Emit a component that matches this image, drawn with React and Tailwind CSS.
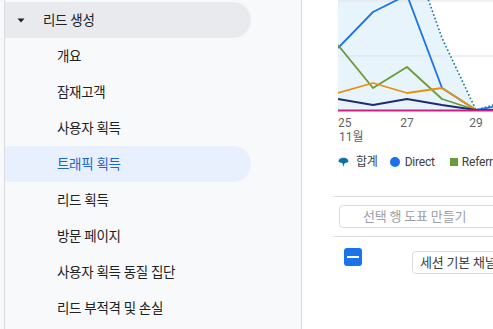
import React from "react";

const font = { fontFamily: 'Roboto, "Noto Sans CJK KR", sans-serif' };

const navItems = [
  { label: "개요" },
  { label: "잠재고객" },
  { label: "사용자 획득" },
  { label: "트래픽 획득", active: true },
  { label: "리드 획득" },
  { label: "방문 페이지" },
  { label: "사용자 획득 동질 집단" },
  { label: "리드 부적격 및 손실" },
];

const series = [
  { color: "#1a73e8", pts: [[0, 48], [35, 12], [69, -5], [104, 88], [138, 110], [160, 106]] },
  { color: "#6a9a3a", pts: [[0, 45], [35, 88], [69, 67], [104, 99], [138, 110], [160, 110]] },
  { color: "#e8900c", pts: [[0, 93], [35, 83], [69, 93], [104, 88], [138, 110], [160, 110]] },
  { color: "#1f2a70", pts: [[0, 99], [35, 105], [69, 99], [104, 105], [138, 110], [160, 110]] },
];

const toPath = (pts) => pts.map((p, i) => `${i ? "L" : "M"}${p[0]} ${p[1]}`).join(" ");

const Chart = () => {
  const total = [[0, -150], [35, -120], [69, -60], [104, 38], [138, 110], [173, 100]];
  const fill = toPath(total) + " L173 110 L0 110 Z";
  return (
    <svg width="155" height="145" viewBox="0 0 155 145" className="block overflow-hidden">
      <path d={fill} fill="#e7f4fc" />
      <line x1="0" y1="1" x2="155" y2="1" stroke="#e3e3e3" strokeWidth="1" />
      <line x1="0" y1="56" x2="155" y2="56" stroke="#dde3e8" strokeWidth="1" />
      <path d={toPath(total)} fill="none" stroke="#1170a6" strokeWidth="1.6" strokeDasharray="1.6 2.2" />
      {series.map((s, i) => (
        <path key={i} d={toPath(s.pts)} fill="none" stroke={s.color} strokeWidth="1.8" strokeLinejoin="round" />
      ))}
      <line x1="0" y1="110.5" x2="155" y2="110.5" stroke="#cc1f82" strokeWidth="2" />
      <g fill="#5f6368" fontSize="12" style={font}>
        <text x="0" y="127">25</text>
        <text x="69" y="127" textAnchor="middle">27</text>
        <text x="138" y="127" textAnchor="middle">29</text>
        <text x="1" y="141">11월</text>
      </g>
    </svg>
  );
};

export default function App() {
  return (
    <div className="flex h-[329px] w-[493px] overflow-hidden bg-white text-[#202124]" style={font}>
      <aside className="w-[302px] shrink-0 border-r border-[#dadce0] bg-[#f8f9fa] pl-1">
        <div className="h-full border-l border-[#dadce0] pt-[2px]">
          <div className="flex h-[36px] w-[246px] items-center rounded-r-full bg-[#e8eaed] text-[13.5px] tracking-[-0.3px]">
            <svg width="8" height="5" viewBox="0 0 8 5" className="ml-[12px] mr-[18px] shrink-0">
              <path d="M0.5 0.5 L7.5 0.5 L4 4.5 Z" fill="#202124" />
            </svg>
            <span>리드 생성</span>
          </div>
          {navItems.map((item) => (
            <div
              key={item.label}
              className={`flex h-[36px] w-[246px] items-center rounded-r-full pl-[52px] text-[13.5px] tracking-[-0.3px] ${
                item.active ? "bg-[#e8f0fe] text-[#1967d2]" : ""
              }`}
            >
              {item.label}
            </div>
          ))}
        </div>
      </aside>

      <main className="min-w-0 flex-1 overflow-hidden pl-[31px]">
        <div className="ml-[5px]">
          <Chart />
        </div>
        <div className="ml-[5px] mt-[9px] flex h-[16px] items-center whitespace-nowrap text-[12px] tracking-[-0.2px] text-[#3c4043]">
          <svg width="11" height="10" viewBox="0 0 11 10" className="mr-[7px] shrink-0">
            <path d="M0.5 5 C0.5 2 3 0.8 5.5 0.8 C8 0.8 10.5 2 10.5 5 L6.6 6.2 L5.5 9.8 L4.4 6.2 Z" fill="#1170a6" />
          </svg>
          <span className="shrink-0">합계</span>
          <span className="ml-[12px] mr-[5px] h-[10px] w-[10px] shrink-0 rounded-full bg-[#1a73e8]" />
          <span className="shrink-0">Direct</span>
          <span className="ml-[15px] mr-[4px] h-[8px] w-[8px] shrink-0 bg-[#6a9a3a]" />
          <span className="shrink-0">Referral</span>
        </div>
        <div className="mt-[26px] w-[220px] border-t border-[#dadce0]" />
        <div className="ml-[6px] mt-[8px] flex h-[23px] w-[200px] items-center rounded-[4px] border border-[#dadce0] pl-[23px] text-[13px] tracking-[-0.2px] text-[#9aa0a6] whitespace-nowrap">
          선택 행 도표 만들기
        </div>
        <div className="mt-[8px] w-[220px] border-t border-[#dadce0]" />
        <div className="mt-[11px] flex items-start whitespace-nowrap">
          <div className="ml-[11px] flex h-[18px] w-[18px] shrink-0 items-center justify-center rounded-[3px] bg-[#1a73e8]">
            <div className="h-[2px] w-[12px] bg-white" />
          </div>
          <div className="ml-[50px] mt-[3px] flex h-[23px] w-[200px] shrink-0 items-center rounded-[4px] border border-[#dadce0] pl-[7px] text-[13px] tracking-[-0.2px] text-[#3c4043]">
            세션 기본 채널 그룹
          </div>
        </div>
      </main>
    </div>
  );
}
